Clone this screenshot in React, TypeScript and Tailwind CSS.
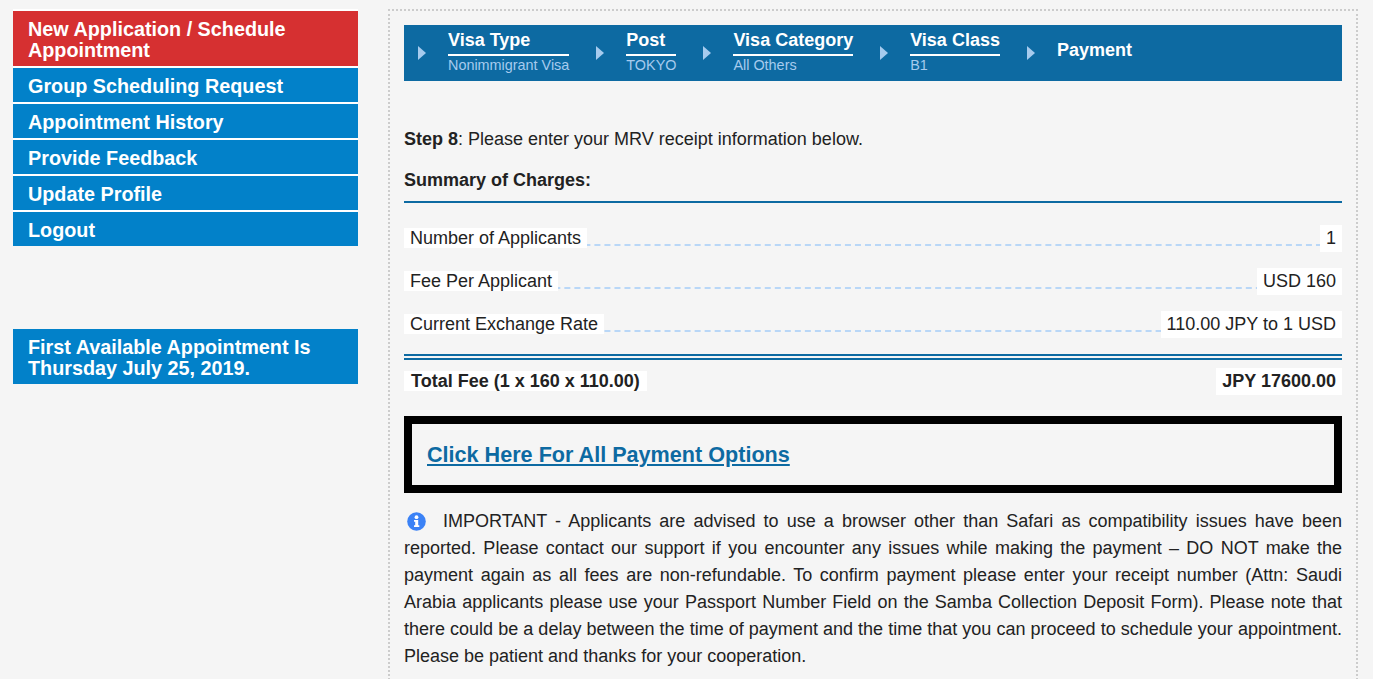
import React from "react";

const font = { fontFamily: '"Liberation Sans", Arial, sans-serif' };

function Arrow() {
  return (
    <svg width="8" height="14" viewBox="0 0 8 14" className="shrink-0">
      <path d="M0 0L8 7L0 14Z" fill="#a6cbee" />
    </svg>
  );
}

function Crumb({ title, sub }: { title: string; sub: string }) {
  return (
    <div className="flex flex-col self-start pt-[5px]">
      <div className="text-[18px] leading-[21px] font-bold text-white border-b-2 border-white pb-[3px] whitespace-nowrap">{title}</div>
      <div className="text-[14.4px] leading-[16px] mt-[1px] text-[#a6cbee] whitespace-nowrap">{sub}</div>
    </div>
  );
}

function Row({ label, value }: { label: string; value: string }) {
  return (
    <div className="relative flex justify-between items-start h-[27px] mb-[16px]">
      <div className="absolute left-0 right-0 top-[19px] border-b-2 border-dashed border-[#b9d7f7]" />
      <span className="relative bg-white px-[6px] mt-[3px] h-[20px] leading-[20px] whitespace-nowrap">{label}</span>
      <span className="relative bg-white px-[6px] h-[27px] leading-[27px] whitespace-nowrap">{value}</span>
    </div>
  );
}

function MenuItem({ children }: { children: React.ReactNode }) {
  return (
    <div className="bg-[#0281c9] text-white font-bold text-[19.8px] leading-[20px] px-[15px] pt-[8px] pb-[6px]">
      {children}
    </div>
  );
}

export default function App() {
  return (
    <div className="h-[679px] overflow-hidden bg-[#f5f5f5] flex items-start text-[#222] pl-[13px] pt-[9px]" style={font}>
      <aside className="w-[345px] shrink-0">
        <div className="flex flex-col gap-[2px] bg-white pt-[2px]">
          <div className="bg-[#d63031] text-white font-bold text-[19.8px] leading-[21px] px-[15px] pt-[8px] pb-[5px]">
            New Application / Schedule Appointment
          </div>
          <MenuItem>Group Scheduling Request</MenuItem>
          <MenuItem>Appointment History</MenuItem>
          <MenuItem>Provide Feedback</MenuItem>
          <MenuItem>Update Profile</MenuItem>
          <MenuItem>Logout</MenuItem>
        </div>
        <div className="mt-[83px] bg-[#0281c9] text-white font-bold text-[19.8px] leading-[21px] px-[15px] pt-[8px] pb-[5px] h-[55px]">
          First Available Appointment Is Thursday July 25, 2019.
        </div>
      </aside>

      <main className="ml-[30px] w-[970px] shrink-0 border-2 border-dotted border-[#ccc] px-[14px] pt-[14px] pb-[40px] text-[18px]">
        <div className="h-[56px] bg-[#0d6aa2] flex items-center pl-[14px]">
          <Arrow />
          <div className="ml-[22px] self-start"><Crumb title="Visa Type" sub="Nonimmigrant Visa" /></div>
          <div className="ml-[27px] flex"><Arrow /></div>
          <div className="ml-[22px] self-start"><Crumb title="Post" sub="TOKYO" /></div>
          <div className="ml-[27px] flex"><Arrow /></div>
          <div className="ml-[22px] self-start"><Crumb title="Visa Category" sub="All Others" /></div>
          <div className="ml-[27px] flex"><Arrow /></div>
          <div className="ml-[22px] self-start"><Crumb title="Visa Class" sub="B1" /></div>
          <div className="ml-[27px] flex"><Arrow /></div>
          <div className="ml-[22px] text-[18px] font-bold text-white self-start mt-[15px] leading-[21px]">Payment</div>
        </div>

        <p className="mt-[47px] leading-[22px]"><b>Step 8</b>: Please enter your MRV receipt information below.</p>
        <h3 className="mt-[19px] font-bold leading-[22px]">Summary of Charges:</h3>
        <div className="mt-[10px] border-t-2 border-[#0d6aa2] pt-[22px]">
          <Row label="Number of Applicants" value="1" />
          <Row label="Fee Per Applicant" value="USD 160" />
          <Row label="Current Exchange Rate" value="110.00 JPY to 1 USD" />
        </div>
        <div className="border-t-2 border-b-2 border-[#0d6aa2] h-[6px]" />
        <div className="flex justify-between items-start mt-[8px] font-bold">
          <span className="bg-white px-[7px] h-[20px] leading-[20px] mt-[3px]">Total Fee (1 x 160 x 110.00)</span>
          <span className="bg-white px-[6px] h-[27px] leading-[27px]">JPY 17600.00</span>
        </div>

        <div className="mt-[21px] border-[8px] border-black h-[77px] flex items-center pl-[15px] pt-[2px]">
          <a className="text-[#0d6aa2] underline font-bold text-[21.6px]" href="#">Click Here For All Payment Options</a>
        </div>

        <div className="mt-[15px] leading-[27px] text-justify">
          <svg width="19" height="19" viewBox="0 0 19 19" className="inline-block align-[-4px] ml-[3px] mr-[17px]">
            <circle cx="9.5" cy="9.5" r="9.3" fill="#3b82f6" />
            <circle cx="9.5" cy="5.2" r="1.9" fill="#fff" />
            <path d="M7 8H11.2V13.2H12.3V15H7V13.2H8.2V9.7H7Z" fill="#fff" />
          </svg>
          IMPORTANT - Applicants are advised to use a browser other than Safari as compatibility issues have been reported. Please contact our support if you encounter any issues while making the payment – DO NOT make the payment again as all fees are non-refundable. To confirm payment please enter your receipt number (Attn: Saudi Arabia applicants please use your Passport Number Field on the Samba Collection Deposit Form). Please note that there could be a delay between the time of payment and the time that you can proceed to schedule your appointment. Please be patient and thanks for your cooperation.
        </div>
      </main>
    </div>
  );
}
